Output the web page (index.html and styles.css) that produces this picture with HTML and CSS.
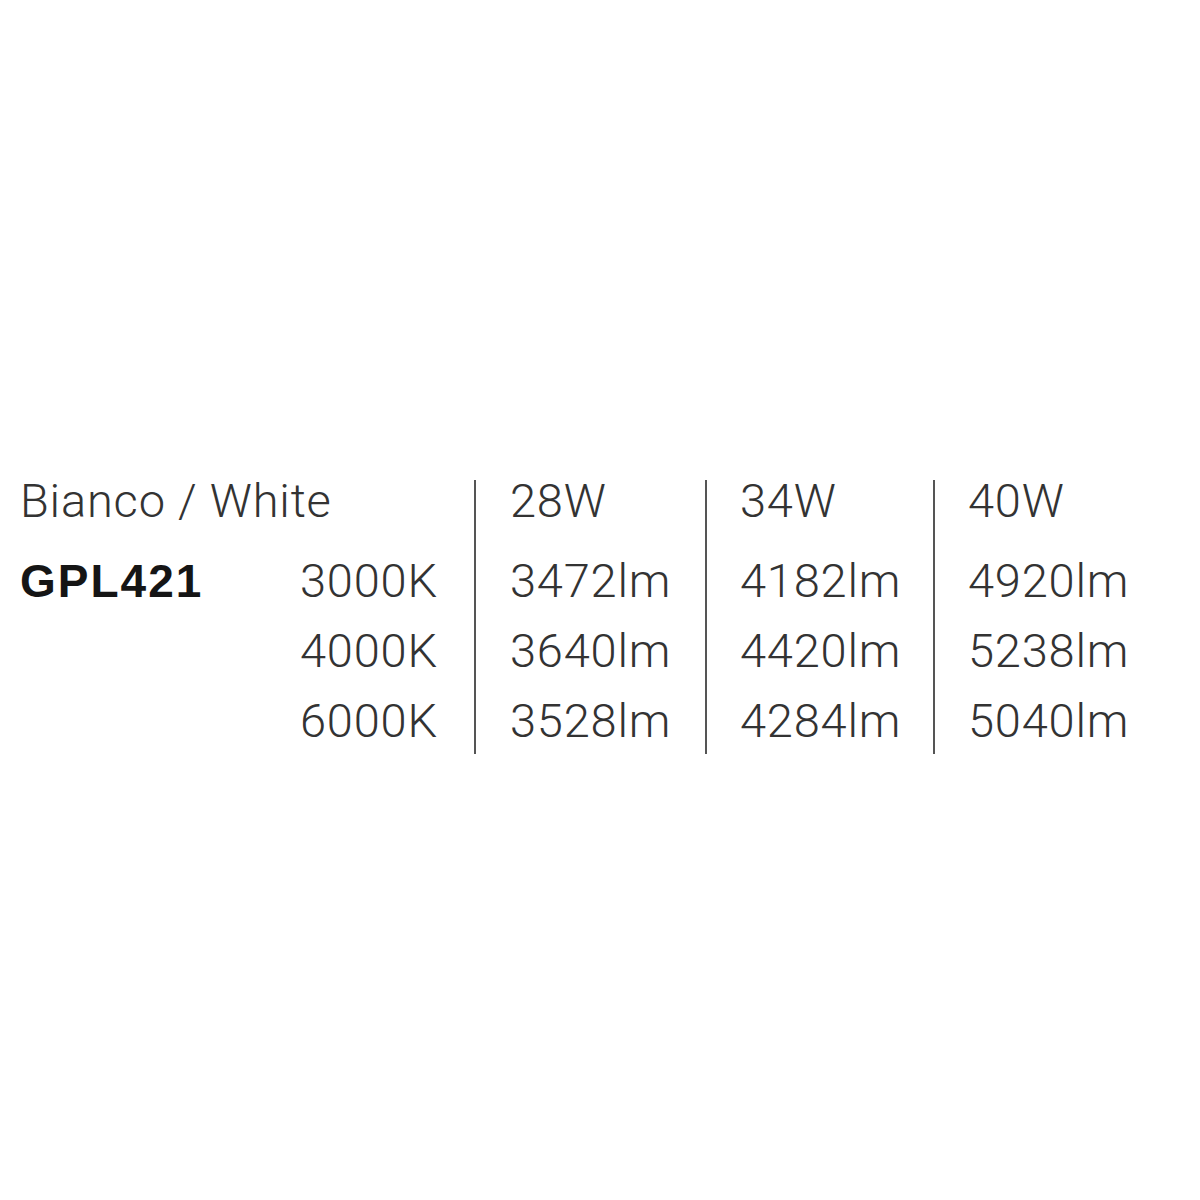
FILE: index.html
```html
<!DOCTYPE html>
<html>
<head>
<meta charset="utf-8">
<link rel="stylesheet" href="styles.css">
</head>
<body>
<div class="table">
  <div class="left">
    <div class="cell head">Bianco / White</div>
    <div class="row"><div class="cell code">GPL421</div><div class="cell temp">3000K</div></div>
    <div class="row"><div class="cell code"></div><div class="cell temp">4000K</div></div>
    <div class="row"><div class="cell code"></div><div class="cell temp">6000K</div></div>
  </div>
  <div class="col col-a">
    <div class="cell head">28W</div>
    <div class="cell">3472lm</div>
    <div class="cell">3640lm</div>
    <div class="cell">3528lm</div>
  </div>
  <div class="col col-b">
    <div class="cell head">34W</div>
    <div class="cell">4182lm</div>
    <div class="cell">4420lm</div>
    <div class="cell">4284lm</div>
  </div>
  <div class="col col-c">
    <div class="cell head">40W</div>
    <div class="cell">4920lm</div>
    <div class="cell">5238lm</div>
    <div class="cell">5040lm</div>
  </div>
</div>
</body>
</html>
```
FILE: styles.css
```css
html, body {
  margin: 0;
  padding: 0;
  background: #ffffff;
}
body {
  width: 1200px;
  height: 1200px;
  font-family: Roboto, "Liberation Sans", sans-serif;
  font-weight: 300;
  color: #333333;
}
.table {
  display: flex;
  padding-top: 480px;
  padding-left: 20px;
}
.left {
  width: 454px;
  display: flex;
  flex-direction: column;
  gap: 28px;
}
.row {
  display: flex;
}
.cell {
  height: 42px;
  line-height: 42px;
  font-size: 47px;
  letter-spacing: 0.8px;
  white-space: nowrap;
}
.head {
  margin-bottom: 10px;
}
.code {
  width: 280px;
  font-family: "Liberation Sans", sans-serif;
  font-weight: 700;
  font-size: 46px;
  letter-spacing: 2px;
  color: #151515;
}
.temp {
  flex: 1;
}
.col {
  display: flex;
  flex-direction: column;
  gap: 28px;
  border-left: 2px solid #555555;
  padding-left: 34px;
  padding-bottom: 12px;
}
.col-a { width: 195px; }
.col-b { width: 193px; padding-left: 33px; }
.col-c { width: 230px; padding-left: 33px; }
```
